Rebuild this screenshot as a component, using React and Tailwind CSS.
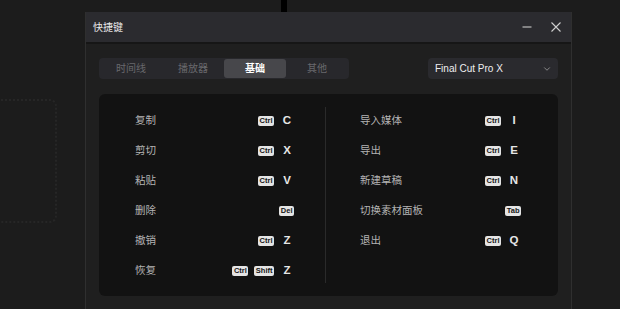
import React from 'react';
import { ChevronDown } from 'lucide-react';

const leftRows = [
  { label: '复制', mods: ['Ctrl'], letter: 'C' },
  { label: '剪切', mods: ['Ctrl'], letter: 'X' },
  { label: '粘贴', mods: ['Ctrl'], letter: 'V' },
  { label: '删除', mods: ['Del'], letter: '' },
  { label: '撤销', mods: ['Ctrl'], letter: 'Z' },
  { label: '恢复', mods: ['Ctrl', 'Shift'], letter: 'Z' },
];

const rightRows = [
  { label: '导入媒体', mods: ['Ctrl'], letter: 'I' },
  { label: '导出', mods: ['Ctrl'], letter: 'E' },
  { label: '新建草稿', mods: ['Ctrl'], letter: 'N' },
  { label: '切换素材面板', mods: ['Tab'], letter: '' },
  { label: '退出', mods: ['Ctrl'], letter: 'Q' },
];

const tabs = ['时间线', '播放器', '基础', '其他'];

const sans = 'font-["Liberation_Sans","Noto_Sans_CJK_SC",sans-serif]';

function Keys({ mods, letter }) {
  return (
    <div className="flex items-center gap-[6px]">
      {mods.map((m) => (
        <span
          key={m}
          className={`flex h-[10px] items-center rounded-[2px] bg-[#e4e4e4] px-[1.5px] text-[7.5px] font-bold leading-none text-[#151515] ${sans}`}
        >
          {m}
        </span>
      ))}
      {letter && (
        <span className={`w-[14px] text-center text-[11.5px] font-bold leading-none text-[#e6e6e6] ${sans}`}>
          {letter}
        </span>
      )}
    </div>
  );
}

function Row({ row }) {
  return (
    <div className="flex h-[30px] items-center justify-between">
      <span className={`text-[10.5px] text-[#b4b4b4] ${sans}`}>{row.label}</span>
      <Keys mods={row.mods} letter={row.letter} />
    </div>
  );
}

export default function App() {
  return (
    <div className={`relative h-[309px] w-[620px] overflow-hidden bg-[#1c1c1c] ${sans}`}>
      {/* page behind the dialog */}
      <div className="ml-[281px] h-[12px] w-[6px] bg-black" />
      <div className="-ml-[10px] mt-[87px] h-[124px] w-[67px] rounded-[7px] border-2 border-dotted border-[#262626]" />

      {/* 快捷键 dialog */}
      <div className="absolute left-[85px] top-[12px] h-[310px] w-[487px] border-x border-[#2f2f2f] bg-[#1f1f1f]">
        <div className="flex h-[32px] items-center justify-between border-b-2 border-[#161616] bg-[#2b2b2f] pl-[7px] pr-[10px]">
          <span className="text-[10px] text-[#e8e8e8]">快捷键</span>
          <div className="flex items-center gap-[19px]">
            <svg width="10" height="10" viewBox="0 0 10 10">
              <line x1="0.5" y1="5" x2="9.5" y2="5" stroke="#bdbdbd" strokeWidth="1.2" />
            </svg>
            <svg width="10" height="10" viewBox="0 0 10 10">
              <path d="M0.5 0.5 L9.5 9.5 M9.5 0.5 L0.5 9.5" stroke="#cfcfcf" strokeWidth="1.1" />
            </svg>
          </div>
        </div>

        <div className="px-[13px] pt-[14px]">
          <div className="flex items-center justify-between">
            <div className="flex h-[21px] w-[250px] rounded-[4px] bg-[#28282c] p-[1px]">
              {tabs.map((t) => (
                <div
                  key={t}
                  className={
                    t === '基础'
                      ? 'flex flex-1 items-center justify-center rounded-[3px] bg-[#47474b] text-[10px] font-bold text-white'
                      : 'flex flex-1 items-center justify-center text-[10px] text-[#68686c]'
                  }
                >
                  {t}
                </div>
              ))}
            </div>
            <div className="flex h-[21px] w-[130px] items-center justify-between rounded-[4px] bg-[#2a2a2e] pl-[7px] pr-[6px]">
              <span className="text-[10px] font-medium text-[#eeeeee]">Final Cut Pro X</span>
              <ChevronDown size={10} strokeWidth={2} color="#9a9a9a" />
            </div>
          </div>

          <div className="mt-[15px] flex rounded-[6px] bg-[#121212]">
            <div className="w-[226px] pb-[10px] pl-[36px] pr-[31px] pt-[12px]">
              {leftRows.map((r) => (
                <Row key={r.label} row={r} />
              ))}
            </div>
            <div className="my-[13px] w-px bg-[#2a2a2a]" />
            <div className="flex-1 pb-[10px] pl-[34px] pr-[37px] pt-[12px]">
              {rightRows.map((r) => (
                <Row key={r.label} row={r} />
              ))}
            </div>
          </div>
        </div>
      </div>
    </div>
  );
}
